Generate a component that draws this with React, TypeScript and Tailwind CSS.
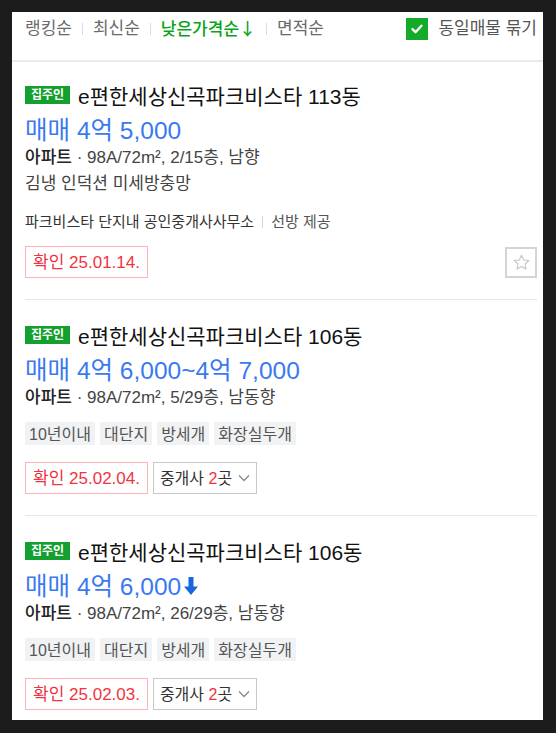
import React from 'react';

type Listing = {
  title: string;
  price: string;
  drop?: boolean;
  area: string;
  features?: string;
  realtor?: string;
  tags?: string[];
  date: string;
  brokers?: number;
};

const listings: Listing[] = [
  {
    title: 'e편한세상신곡파크비스타 113동',
    price: '매매 4억 5,000',
    area: '98A/72m², 2/15층, 남향',
    features: '김냉 인덕션 미세방충망',
    realtor: '파크비스타 단지내 공인중개사사무소',
    date: '25.01.14.',
  },
  {
    title: 'e편한세상신곡파크비스타 106동',
    price: '매매 4억 6,000~4억 7,000',
    area: '98A/72m², 5/29층, 남동향',
    tags: ['10년이내', '대단지', '방세개', '화장실두개'],
    date: '25.02.04.',
    brokers: 2,
  },
  {
    title: 'e편한세상신곡파크비스타 106동',
    price: '매매 4억 6,000',
    drop: true,
    area: '98A/72m², 26/29층, 남동향',
    tags: ['10년이내', '대단지', '방세개', '화장실두개'],
    date: '25.02.03.',
    brokers: 2,
  },
];

const SortBar: React.FC = () => {
  const sep = <span className="mx-[10px] h-[12px] w-px bg-[#dddddd]" />;
  return (
    <div className="h-[50px] shrink-0 border-b-2 border-[#ebebeb] pt-[6px] pl-[13px] pr-[6px]">
      <div className="flex h-[22px] items-center text-[17px] text-[#6a6a6a]">
        <span>랭킹순</span>
        {sep}
        <span>최신순</span>
        {sep}
        <span className="font-medium text-[#0aa31a]">
          낮은가격순<span className="font-['Noto_Sans_CJK_KR',sans-serif]">↓</span>
        </span>
        {sep}
        <span>면적순</span>
        <div className="ml-auto flex items-center gap-[10px]">
          <span className="flex h-[22px] w-[22px] items-center justify-center bg-[#15ab2a]">
            <svg width="14" height="14" viewBox="0 0 14 14" fill="none">
              <path d="M2.5 7.2l3 3 6-6.4" stroke="#fff" strokeWidth="2.4" strokeLinecap="round" strokeLinejoin="round" />
            </svg>
          </span>
          <span className="text-[#555]">동일매물 묶기</span>
        </div>
      </div>
    </div>
  );
};

const ListingItem: React.FC<{ item: Listing; first?: boolean }> = ({ item, first }) => {
  return (
    <div className={`border-b border-[#e6e6e6] pb-[21px] ${first ? 'pt-[20px]' : 'pt-[22px]'}`}>
      {/* title */}
      <div className="flex h-[26px] items-center">
        <span className="flex h-[18px] w-[45px] items-center justify-center bg-[#14a02f] text-[12px] font-bold leading-none text-white">
          집주인
        </span>
        <span className="ml-[8px] mt-[4px] text-[21px] leading-[26px] text-[#111]">{item.title}</span>
      </div>

      {/* price */}
      <div className="mt-[8px] flex h-[30px] items-center text-[24.5px] leading-[30px] text-[#3b79f0]">
        <span>{item.price}</span>
        {item.drop && (
          <svg className="ml-[3px] -mt-[3px]" width="14" height="18" viewBox="0 0 14 18">
            <path d="M4.5 0h5v9.5H14L7 18 0 9.5h4.5z" fill="#1a66e0" />
          </svg>
        )}
      </div>

      {/* spec */}
      <div className="mt-[1px] h-[22px] text-[17px] leading-[22px] text-[#444]">
        <span className="font-medium text-[#222]">아파트</span> · {item.area}
      </div>

      {item.features && (
        <div className="mt-[4px] h-[22px] text-[17px] leading-[22px] text-[#444]">{item.features}</div>
      )}

      {item.realtor && (
        <div className="mt-[17px] flex h-[20px] items-center text-[15px] text-[#333]">
          <span>{item.realtor}</span>
          <span className="mx-[8px] h-[12px] w-px bg-[#d5d5d5]" />
          <span className="text-[#555]">선방 제공</span>
        </div>
      )}

      {item.tags && (
        <div className="mt-[13px] flex gap-[5px]">
          {item.tags.map((t) => (
            <span key={t} className="flex h-[23px] items-center bg-[#f1f2f4] px-[4px] pt-[2px] text-[16px] text-[#555]">
              {t}
            </span>
          ))}
        </div>
      )}

      {/* confirm row */}
      <div className={`flex items-center gap-[5px] ${item.realtor ? 'mt-[14px]' : 'mt-[17px]'}`}>
        <span className="flex h-[32px] w-[123px] items-center justify-center border border-[#ffb4ba] pt-[2px] text-[17px] text-[#f2333f]">
          확인 {item.date}
        </span>
        {item.brokers && (
          <span className="flex h-[32px] w-[104px] items-center justify-center border border-[#c8c8c8] text-[16px] text-[#333]">
            <span className="pt-[2px]">
              중개사 <span className="text-[#f2333f]">{item.brokers}</span>곳
            </span>
            <svg className="ml-[6px]" width="12" height="8" viewBox="0 0 12 8" fill="none">
              <path d="M1 1.5l5 5 5-5" stroke="#888" strokeWidth="1.3" />
            </svg>
          </span>
        )}
        {!item.brokers && (
          <span className="ml-auto flex h-[31px] w-[32px] items-center justify-center border-2 border-[#d4d4d4]">
            <svg width="19" height="19" viewBox="0 0 24 24" fill="none">
              <path
                d="M12 2.8l2.8 6 6.5.7-4.9 4.4 1.4 6.4L12 17l-5.8 3.3 1.4-6.4L2.7 9.5l6.5-.7z"
                stroke="#c2c2c2"
                strokeWidth="1.3"
                strokeLinejoin="round"
              />
            </svg>
          </span>
        )}
      </div>
    </div>
  );
};

const App: React.FC = () => {
  return (
    <div className="h-[733px] w-[556px] overflow-hidden bg-[#1c1c1c] pt-[12px] pl-[12px] font-['Liberation_Sans','Noto_Sans_CJK_KR',sans-serif]">
      <div className="flex h-[708px] w-[531px] flex-col overflow-hidden bg-white">
        <SortBar />
        <div className="pl-[13px] pr-[6px]">
          {listings.map((item, i) => (
            <ListingItem key={i} item={item} first={i === 0} />
          ))}
        </div>
      </div>
    </div>
  );
};

export default App;
